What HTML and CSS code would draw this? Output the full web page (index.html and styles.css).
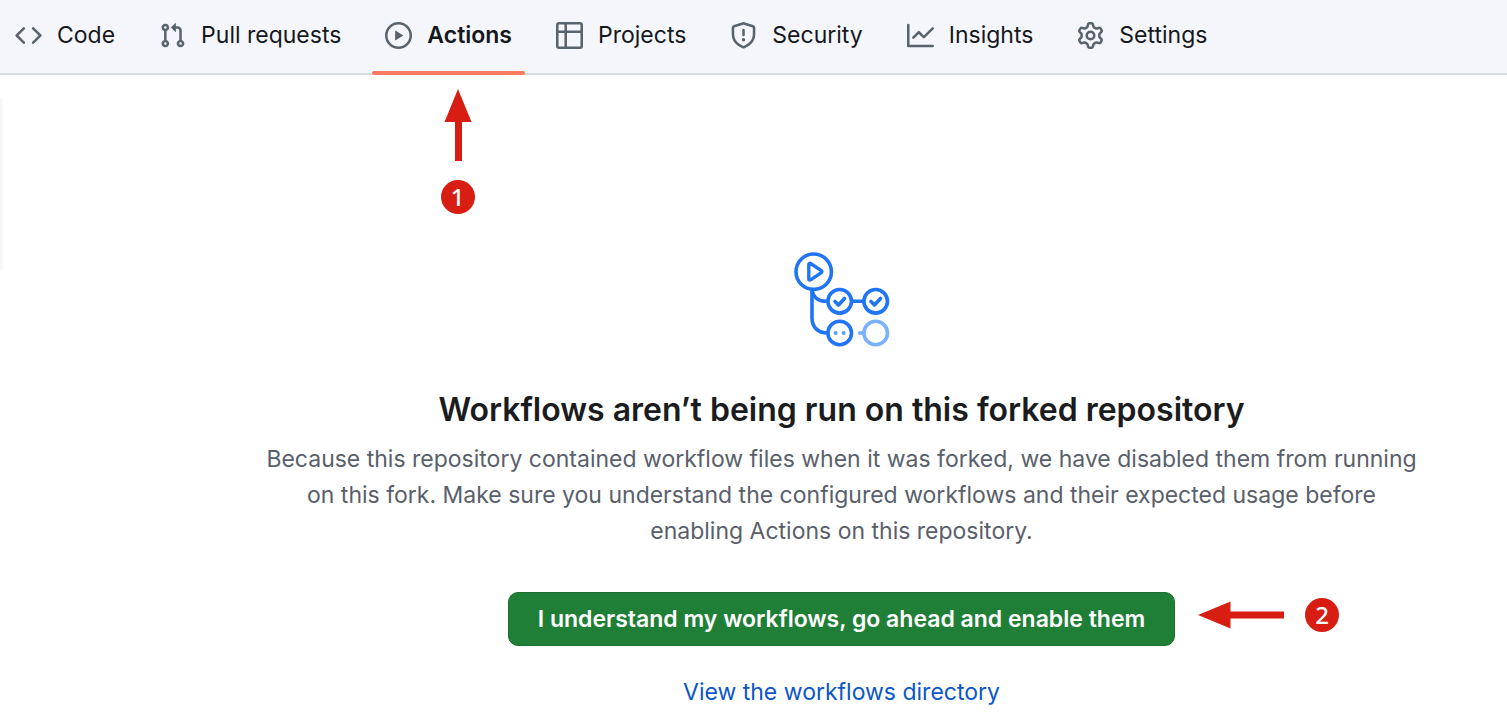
FILE: index.html
```html
<!DOCTYPE html>
<html lang="en">
<head>
<meta charset="utf-8">
<title>Actions</title>
<link rel="stylesheet" href="styles.css">
</head>
<body>
<nav class="tabs" aria-label="Repository">
  <a class="tab" href="#code">
    <svg class="tab-icon" viewBox="0 0 16 16" aria-hidden="true"><path d="m11.28 3.22 4.25 4.25a.75.75 0 0 1 0 1.06l-4.25 4.25a.749.749 0 0 1-1.275-.326.749.749 0 0 1 .215-.734L13.94 8l-3.72-3.72a.749.749 0 0 1 .326-1.275.749.749 0 0 1 .734.215Zm-6.56 0a.751.751 0 0 1 1.042.018.751.751 0 0 1 .018 1.042L2.06 8l3.72 3.72a.749.749 0 0 1-.326 1.275.749.749 0 0 1-.734-.215L.47 8.53a.75.75 0 0 1 0-1.06Z"/></svg>
    <span>Code</span>
  </a>
  <a class="tab" href="#pulls">
    <svg class="tab-icon" viewBox="0 0 16 16" aria-hidden="true"><path d="M1.5 3.25a2.25 2.25 0 1 1 3 2.122v5.256a2.251 2.251 0 1 1-1.5 0V5.372A2.25 2.25 0 0 1 1.5 3.25Zm5.677-.177L9.573.677A.25.25 0 0 1 10 .854V2.5h1A2.5 2.5 0 0 1 13.5 5v5.628a2.251 2.251 0 1 1-1.5 0V5a1 1 0 0 0-1-1h-1v1.646a.25.25 0 0 1-.427.177L7.177 3.427a.25.25 0 0 1 0-.354ZM3.75 2.5a.75.75 0 1 0 0 1.5.75.75 0 0 0 0-1.5Zm0 9.5a.75.75 0 1 0 0 1.5.75.75 0 0 0 0-1.5Zm8.25.75a.75.75 0 1 0 1.5 0 .75.75 0 0 0-1.5 0Z"/></svg>
    <span>Pull requests</span>
  </a>
  <a class="tab tab-current" href="#actions" aria-current="page">
    <svg class="tab-icon" viewBox="0 0 16 16" aria-hidden="true"><path d="M8 0a8 8 0 1 1 0 16A8 8 0 0 1 8 0ZM1.5 8a6.5 6.5 0 1 0 13 0 6.5 6.5 0 0 0-13 0Zm4.879-2.773 4.264 2.559a.25.25 0 0 1 0 .428l-4.264 2.559A.25.25 0 0 1 6 10.559V5.442a.25.25 0 0 1 .379-.215Z"/></svg>
    <span>Actions</span>
    <span class="step step-up">
      <svg class="arrow-up" viewBox="0 0 28 72" aria-hidden="true"><path d="M14 0 27.500 33H18V72H11V33H.5Z"/></svg>
      <span class="badge">1</span>
    </span>
  </a>
  <a class="tab" href="#projects">
    <svg class="tab-icon" viewBox="0 0 16 16" aria-hidden="true"><path d="M0 1.750C0 .784.784 0 1.750 0h12.500C15.216 0 16 .784 16 1.750v12.500A1.750 1.750 0 0 1 14.250 16H1.750A1.750 1.750 0 0 1 0 14.250ZM6.500 6.500v8h7.750a.25.25 0 0 0 .25-.25V6.500Zm8-1.500V1.750a.25.25 0 0 0-.25-.25H6.500V5Zm-13 1.500v7.750c0 .138.112.25.25.25H5v-8ZM5 5V1.500H1.750a.25.25 0 0 0-.25.25V5Z"/></svg>
    <span>Projects</span>
  </a>
  <a class="tab" href="#security">
    <svg class="tab-icon" viewBox="0 0 16 16" aria-hidden="true"><path d="M7.467.133a1.748 1.748 0 0 1 1.066 0l5.250 1.680A1.750 1.750 0 0 1 15 3.480V7c0 1.566-.32 3.182-1.303 4.682-.983 1.498-2.585 2.813-5.032 3.855a1.697 1.697 0 0 1-1.330 0c-2.447-1.042-4.049-2.357-5.032-3.855C1.320 10.182 1 8.566 1 7V3.480a1.755 1.755 0 0 1 1.217-1.667Zm.61 1.429a.25.25 0 0 0-.153 0l-5.250 1.680a.25.25 0 0 0-.174.238V7c0 1.358.275 2.666 1.057 3.860.784 1.194 2.121 2.340 4.366 3.297a.196.196 0 0 0 .154 0c2.245-.956 3.582-2.104 4.366-3.298C13.225 9.666 13.500 8.360 13.500 7V3.480a.251.251 0 0 0-.174-.237l-5.250-1.680ZM8.750 4.750v3a.75.75 0 0 1-1.500 0v-3a.75.75 0 0 1 1.500 0ZM9 10.500a1 1 0 1 1-2 0 1 1 0 0 1 2 0Z"/></svg>
    <span>Security</span>
  </a>
  <a class="tab" href="#insights">
    <svg class="tab-icon" viewBox="0 0 16 16" aria-hidden="true"><path d="M1.500 1.750V13.500h13.750a.75.75 0 0 1 0 1.500H.75a.75.75 0 0 1-.75-.75V1.750a.75.75 0 0 1 1.500 0Zm14.280 2.530-5.250 5.250a.75.75 0 0 1-1.060 0L7 7.060 4.280 9.780a.751.751 0 0 1-1.042-.018.751.751 0 0 1-.018-1.042l3.250-3.250a.75.75 0 0 1 1.060 0L10 7.940l4.720-4.720a.751.751 0 0 1 1.042.018.751.751 0 0 1 .018 1.042Z"/></svg>
    <span>Insights</span>
  </a>
  <a class="tab" href="#settings">
    <svg class="tab-icon" viewBox="0 0 16 16" aria-hidden="true"><path d="M8 0a8.200 8.200 0 0 1 .701.031C9.444.095 9.990.645 10.160 1.290l.288 1.107c.018.066.079.158.212.224.231.114.454.243.668.386.123.082.233.09.299.071l1.103-.303c.644-.176 1.392.021 1.820.630.270.385.506.792.704 1.218.315.675.111 1.422-.364 1.891l-.814.806c-.049.048-.098.147-.088.294.016.257.016.515 0 .772-.010.147.038.246.088.294l.814.806c.475.469.679 1.216.364 1.891a7.977 7.977 0 0 1-.704 1.217c-.428.610-1.176.807-1.820.630l-1.102-.302c-.067-.019-.177-.011-.300.071a5.909 5.909 0 0 1-.668.386c-.133.066-.194.158-.211.224l-.290 1.106c-.168.646-.715 1.196-1.458 1.260a8.006 8.006 0 0 1-1.402 0c-.743-.064-1.289-.614-1.458-1.260l-.289-1.106c-.018-.066-.079-.158-.212-.224a5.738 5.738 0 0 1-.668-.386c-.123-.082-.233-.090-.299-.071l-1.103.303c-.644.176-1.392-.021-1.820-.630a8.120 8.120 0 0 1-.704-1.218c-.315-.675-.111-1.422.363-1.891l.815-.806c.050-.048.098-.147.088-.294a6.214 6.214 0 0 1 0-.772c.010-.147-.038-.246-.088-.294l-.815-.806C.635 6.045.431 5.298.746 4.623a7.920 7.920 0 0 1 .704-1.217c.428-.610 1.176-.807 1.820-.630l1.102.302c.067.019.177.011.300-.071.214-.143.437-.272.668-.386.133-.066.194-.158.211-.224l.290-1.106C6.009.645 6.556.095 7.299.030 7.530.010 7.764 0 8 0Zm-.571 1.525c-.036.003-.108.036-.137.146l-.289 1.105c-.147.561-.549.967-.998 1.189-.173.086-.340.183-.500.290-.417.278-.970.423-1.529.270l-1.103-.303c-.109-.030-.175.016-.195.045-.220.312-.412.644-.573.990-.014.031-.021.110.059.190l.815.806c.411.406.562.957.530 1.456a4.709 4.709 0 0 0 0 .582c.032.499-.119 1.050-.530 1.456l-.815.806c-.081.080-.073.159-.059.190.162.346.353.677.573.989.020.030.085.076.195.046l1.102-.303c.560-.153 1.113-.008 1.530.270.161.107.328.204.501.290.447.222.850.629.997 1.189l.289 1.105c.029.109.101.143.137.146a6.600 6.600 0 0 0 1.142 0c.036-.003.108-.036.137-.146l.289-1.105c.147-.561.549-.967.998-1.189.173-.086.340-.183.500-.290.417-.278.970-.423 1.529-.270l1.103.303c.109.029.175-.016.195-.045.220-.313.411-.644.573-.990.014-.031.021-.110-.059-.190l-.815-.806c-.411-.406-.562-.957-.530-1.456a4.709 4.709 0 0 0 0-.582c-.032-.499.119-1.050.530-1.456l.815-.806c.081-.080.073-.159.059-.190a6.464 6.464 0 0 0-.573-.989c-.020-.030-.085-.076-.195-.046l-1.102.303c-.560.153-1.113.008-1.530-.270a4.440 4.440 0 0 0-.501-.290c-.447-.222-.850-.629-.997-1.189l-.289-1.105c-.029-.110-.101-.143-.137-.146a6.600 6.600 0 0 0-1.142 0ZM11 8a3 3 0 1 1-6 0 3 3 0 0 1 6 0ZM9.500 8a1.500 1.500 0 1 0-3.001.001A1.500 1.500 0 0 0 9.500 8Z"/></svg>
    <span>Settings</span>
  </a>
</nav>
<div class="page">
  <div class="side-edge"></div>
  <main class="notice">
    <svg class="workflow-icon" viewBox="14 12 96 96" fill="none" aria-hidden="true">
      <g stroke="#1f75f5" stroke-width="3.600" stroke-linecap="round" stroke-linejoin="round">
        <circle cx="33.700" cy="31.700" r="17.700"/>
        <path d="M28.800 24.500v14.400c0 1 1 1.500 1.800 1l10.800-7.200c.7-.5.7-1.500 0-2l-10.800-7.200c-.8-.5-1.800 0-1.800 1Z" stroke-width="3.400"/>
        <path d="M32 50v28c0 9 6 15 15 15"/>
        <path d="M32 50c1 7 6 11.300 14 11.300"/>
        <circle cx="59.700" cy="61.300" r="11.800"/>
        <circle cx="95.700" cy="61.300" r="11.800"/>
        <path d="M73 61.300h10"/>
        <path d="m55 61.500 3.500 3.500 6-6.500M91 61.500l3.500 3.500 6-6.500"/>
        <circle cx="59.700" cy="93" r="11.800"/>
      </g>
      <g fill="#5c9ffa"><circle cx="55.600" cy="93" r="2"/><circle cx="63.600" cy="93" r="2"/></g>
      <g stroke="#79b1fb" stroke-width="3.600" stroke-linecap="round"><circle cx="95.700" cy="93" r="11.800"/><path d="M79.500 93h3"/></g>
    </svg>
    <h1 class="title">Workflows aren’t being run on this forked repository</h1>
    <p class="description">Because this repository contained workflow files when it was forked, we have disabled them from running on this fork. Make sure you understand the configured workflows and their expected usage before enabling Actions on this repository.</p>
    <div class="confirm">
      <button class="enable" type="button">I understand my workflows, go ahead and enable them</button>
      <span class="step step-left">
        <svg class="arrow-left" viewBox="0 0 86 28" aria-hidden="true"><path d="M0 14 32.500.5V10.500H86V17.500H32.500V27.500Z"/></svg>
        <span class="badge">2</span>
      </span>
    </div>
    <a class="directory" href="#workflows">View the workflows directory</a>
  </main>
</div>
</body>
</html>
```
FILE: styles.css
```css
* { box-sizing: border-box; }

body {
  margin: 0;
  background: #fff;
  color: #1f2328;
  font-family: Inter, "Liberation Sans", sans-serif;
  font-size: 23px;
  line-height: 36px;
}

.tabs {
  display: flex;
  gap: 18px;
  padding-left: 2px;
  background: #f5f6fb;
  border-bottom: 2px solid #d6d9de;
}

.tab {
  position: relative;
  display: flex;
  align-items: center;
  gap: 15px;
  padding: 17px 13px 20px;
  color: #15181d;
  text-decoration: none;
  white-space: nowrap;
}

.tab-icon {
  width: 27px;
  height: 27px;
  flex: none;
  fill: #59636e;
}

.tab-current { font-weight: 600; }

.tab-current::after {
  content: "";
  position: absolute;
  left: 0;
  right: 0;
  bottom: -2px;
  height: 4px;
  border-radius: 2px;
  background: #fb7a62;
}

.step {
  position: absolute;
  display: flex;
  align-items: center;
}

.step-up {
  top: 89px;
  left: 18px;
  right: 0;
  flex-direction: column;
  gap: 19px;
}

.step-left {
  top: 6px;
  left: 100%;
  padding-left: 23px;
  gap: 21px;
}

.arrow-up { width: 28px; height: 72px; fill: #d81e12; }
.arrow-left { width: 86px; height: 28px; fill: #d81e12; }

.badge {
  width: 34px;
  height: 34px;
  border-radius: 50%;
  background: #d81e12;
  color: #fff;
  font-family: "Noto Sans", sans-serif;
  font-size: 24px;
  font-weight: 500;
  line-height: 34px;
  text-align: center;
}

.page { position: relative; }

.side-edge {
  position: absolute;
  top: 24px;
  left: 0;
  width: 4px;
  height: 172px;
  background: linear-gradient(to right, #f5f5f9, #fff);
}

.notice {
  display: flex;
  flex-direction: column;
  align-items: center;
  padding: 177px 0 6px 176px;
  text-align: center;
}

.workflow-icon { width: 96px; height: 96px; }

.title {
  margin: 36px 0 0;
  color: #1a1c20;
  font-size: 32px;
  line-height: 52px;
  font-weight: 600;
}

.description {
  max-width: 1160px;
  margin: 5px 0 0;
  color: #59606b;
}

.confirm {
  position: relative;
  margin-top: 43px;
}

.enable {
  padding: 8px 29px;
  border: 1px solid #1b6f30;
  border-radius: 10px;
  background: #1f7f36;
  color: #fff;
  font: inherit;
  font-weight: 600;
}

.directory {
  margin-top: 28px;
  color: #0b57c8;
  text-decoration: none;
}
```
